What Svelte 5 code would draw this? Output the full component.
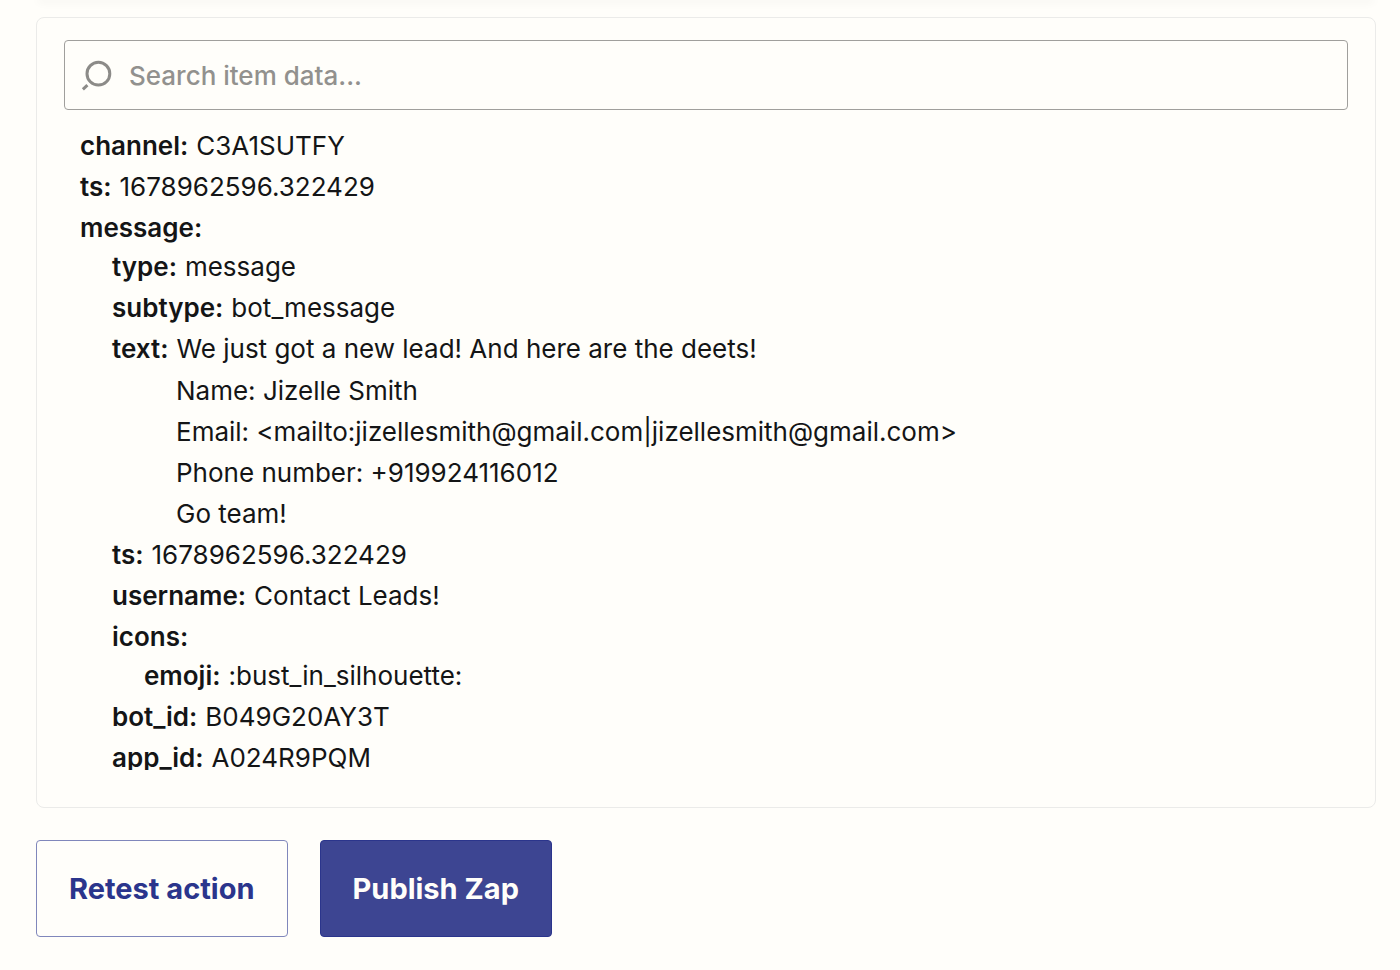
<script>
  const item = [
    { key: 'channel', value: 'C3A1SUTFY' },
    { key: 'ts', value: '1678962596.322429' },
    {
      key: 'message',
      children: [
        { key: 'type', value: 'message' },
        { key: 'subtype', value: 'bot_message' },
        {
          key: 'text',
          value: 'We just got a new lead! And here are the deets!',
          lines: [
            'Name: Jizelle Smith',
            'Email: <mailto:jizellesmith@gmail.com|jizellesmith@gmail.com>',
            'Phone number: +919924116012',
            'Go team!'
          ]
        },
        { key: 'ts', value: '1678962596.322429' },
        { key: 'username', value: 'Contact Leads!' },
        { key: 'icons', children: [{ key: 'emoji', value: ':bust_in_silhouette:' }] },
        { key: 'bot_id', value: 'B049G20AY3T' },
        { key: 'app_id', value: 'A024R9PQM' }
      ]
    }
  ];
  let query = $state('');
</script>

{#snippet tree(entries)}
  <ul>
    {#each entries as entry}
      <li>
        <div class="row">
          <strong>{entry.key}:</strong>
          {#if entry.value}<span>{entry.value}</span>{/if}
        </div>
        {#if entry.lines}
          <div class="lines">
            {#each entry.lines as line}
              <div class="row">{line}</div>
            {/each}
          </div>
        {/if}
        {#if entry.children}{@render tree(entry.children)}{/if}
      </li>
    {/each}
  </ul>
{/snippet}

<div class="page">
  <div class="previous"></div>
  <main>
    <section class="panel">
      <label class="search">
        <svg viewBox="0 0 32 32" aria-hidden="true">
          <circle cx="17.4" cy="14.7" r="11.4" />
          <path d="M6.4 26.2 1.9 30.4" />
        </svg>
        <input type="text" aria-label="Search item data" placeholder="Search item data..." bind:value={query} />
      </label>
      <div class="data">{@render tree(item)}</div>
    </section>
    <div class="actions">
      <button type="button" class="secondary">Retest action</button>
      <button type="button" class="primary">Publish Zap</button>
    </div>
  </main>
</div>

<style>
  :global(body) {
    margin: 0;
    background: #fffefa;
    color: #141516;
    font-family: Inter, 'Liberation Sans', sans-serif;
  }
  .page {
    overflow: hidden;
    padding: 0 24px 32px 36px;
  }
  .previous {
    height: 0;
    margin: 0 4px;
    box-shadow: 0 0 10px 2px rgba(0, 0, 0, 0.06);
  }
  .panel {
    box-sizing: border-box;
    margin-top: 17px;
    padding: 22px 27px 37px;
    border: 1px solid #ebebe9;
    border-radius: 8px;
  }
  .search {
    display: flex;
    align-items: center;
    gap: 16px;
    box-sizing: border-box;
    height: 70px;
    padding: 0 16px;
    border: 1px solid #a09f9c;
    border-radius: 4px;
  }
  .search svg {
    flex: none;
    width: 32px;
    height: 32px;
    fill: none;
    stroke: #8c8b88;
    stroke-width: 3;
  }
  input {
    flex: 1;
    min-width: 0;
    padding: 2px 0 0;
    border: 0;
    outline: 0;
    background: none;
    color: inherit;
    font: 500 26px/32px Inter, 'Liberation Sans', sans-serif;
  }
  input::placeholder {
    color: #92918e;
    opacity: 1;
  }
  .data {
    max-height: 645px;
    margin-top: 15px;
    padding: 0 16px;
    overflow: hidden;
  }
  ul {
    margin: 0;
    padding: 0;
    list-style: none;
  }
  ul ul {
    margin-top: -2px;
    padding-left: 32px;
  }
  .row {
    display: flex;
    align-items: baseline;
    gap: 8px;
    font-size: 26px;
    line-height: 41px;
  }
  strong {
    font-weight: 600;
  }
  .lines {
    padding: 1px 0 0 64px;
  }
  .actions {
    display: flex;
    gap: 32px;
    margin-top: 32px;
  }
  button {
    padding: 29px 32px;
    border: 1px solid #2b358c;
    border-radius: 4px;
    font: 700 29px/37px Inter, 'Liberation Sans', sans-serif;
  }
  .secondary {
    border-color: #8087bb;
    background: #fffefa;
    color: #2b358c;
  }
  .primary {
    background: #3d4592;
    color: #fffefa;
  }
</style>
